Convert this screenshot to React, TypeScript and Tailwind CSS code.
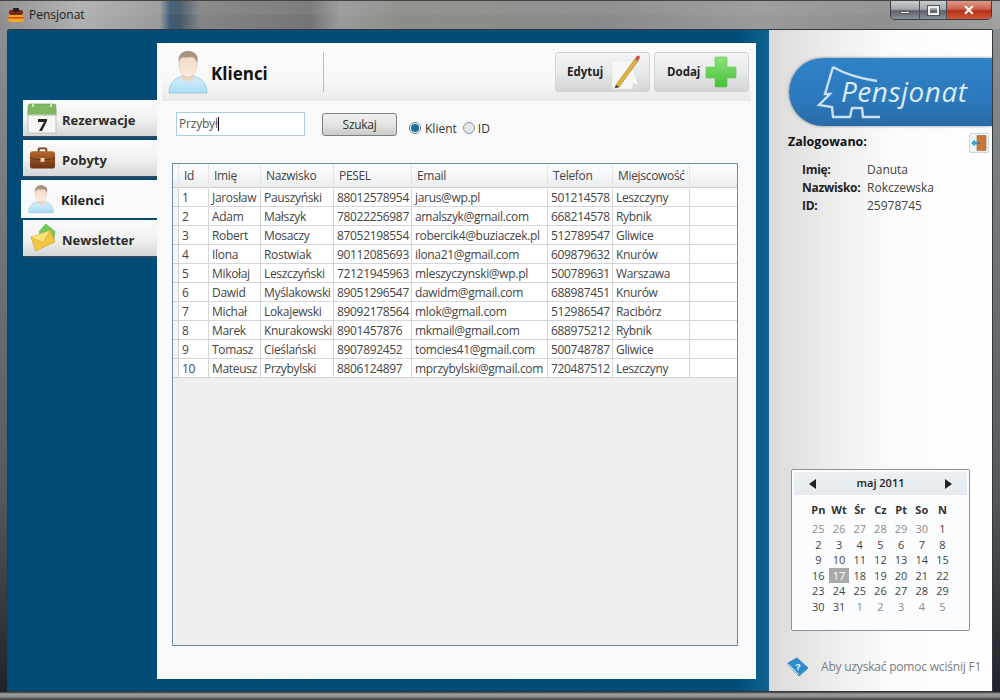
import React from "react";

const FONT = "font-['Open_Sans','Noto_Sans',sans-serif]";

const clients = [
  ["1", "Jarosław", "Pauszyński", "88012578954", "jarus@wp.pl", "501214578", "Leszczyny"],
  ["2", "Adam", "Małszyk", "78022256987", "amalszyk@gmail.com", "668214578", "Rybnik"],
  ["3", "Robert", "Mosaczy", "87052198554", "robercik4@buziaczek.pl", "512789547", "Gliwice"],
  ["4", "Ilona", "Rostwiak", "90112085693", "ilona21@gmail.com", "609879632", "Knurów"],
  ["5", "Mikołaj", "Leszczyński", "72121945963", "mleszyczynski@wp.pl", "500789631", "Warszawa"],
  ["6", "Dawid", "Myślakowski", "89051296547", "dawidm@gmail.com", "688987451", "Knurów"],
  ["7", "Michał", "Lokajewski", "89092178564", "mlok@gmail.com", "512986547", "Racibórz"],
  ["8", "Marek", "Knurakowski", "8901457876", "mkmail@gmail.com", "688975212", "Rybnik"],
  ["9", "Tomasz", "Cieślański", "8907892452", "tomcies41@gmail.com", "500748787", "Gliwice"],
  ["10", "Mateusz", "Przybylski", "8806124897", "mprzybylski@gmail.com", "720487512", "Leszczyny"],
];

const headers = ["Id", "Imię", "Nazwisko", "PESEL", "Email", "Telefon", "Miejscowość"];

const days = [
  [25, 26, 27, 28, 29, 30, 1],
  [2, 3, 4, 5, 6, 7, 8],
  [9, 10, 11, 12, 13, 14, 15],
  [16, 17, 18, 19, 20, 21, 22],
  [23, 24, 25, 26, 27, 28, 29],
  [30, 31, 1, 2, 3, 4, 5],
];

const ROW = "grid grid-cols-[6px_30px_52px_73px_78px_136px_65px_77px_1fr]";

function PersonIcon({ className }: { className: string }) {
  return (
    <svg viewBox="0 0 40 44" className={className}>
      <defs>
        <linearGradient id="shirt" x1="0" y1="0" x2="0" y2="1">
          <stop offset="0" stopColor="#d8effa" />
          <stop offset="1" stopColor="#a9dcf3" />
        </linearGradient>
        <linearGradient id="face" x1="0" y1="0" x2="0" y2="1">
          <stop offset="0" stopColor="#efd3bc" />
          <stop offset="1" stopColor="#fbeee2" />
        </linearGradient>
      </defs>
      <path d="M1 43c0-10 6-15 14-17h10c8 2 14 7 14 17z" fill="url(#shirt)" stroke="#8fc1da" strokeWidth="0.8" />
      <path d="M14 20h12v8c-2 4-10 4-12 0z" fill="#f0d3bb" />
      <ellipse cx="20" cy="14" rx="9" ry="13" fill="url(#face)" stroke="#d6b8a0" strokeWidth="0.5" />
      <path d="M11 13C9 4 15 1 20 1s12 3 9 12c-1-4-3-6-6-6-4 1-9 0-10 1-1 1-2 3-2 5z" fill="#a8937e" />
    </svg>
  );
}

function CalendarIcon() {
  return (
    <svg viewBox="0 0 32 32" className="w-[32px] h-[32px]">
      <rect x="1" y="8" width="28" height="23" fill="#f6f6f2" stroke="#c4c4bc" />
      <path d="M1 4q0-2 2-2h24q2 0 2 2v9H1z" fill="#7fb860" stroke="#6a9f50" strokeWidth="0.6" />
      <rect x="5" y="1" width="2" height="4" fill="#cfe6bd" />
      <rect x="23" y="1" width="2" height="4" fill="#cfe6bd" />
      <path d="M1 13h28" stroke="#d8d8d0" />
      <path d="M11 17h9v2l-5 10h-3l5-9h-6z" fill="#262626" />
    </svg>
  );
}

function BriefcaseIcon() {
  return (
    <svg viewBox="0 0 28 24" className="w-[27px] h-[24px]">
      <defs>
        <linearGradient id="case" x1="0" y1="0" x2="0" y2="1">
          <stop offset="0" stopColor="#b5672f" />
          <stop offset="1" stopColor="#6d3413" />
        </linearGradient>
      </defs>
      <path d="M9 6V3q0-2 2-2h6q2 0 2 2v3h-2V3h-6v3z" fill="#6f3d1c" />
      <rect x="1" y="5" width="26" height="18" rx="3" fill="url(#case)" />
      <path d="M1 12q13 4 26 0" stroke="#5d2c10" strokeWidth="0.8" fill="none" />
      <rect x="12" y="12" width="4" height="4" rx="0.5" fill="#f2e2c8" />
    </svg>
  );
}

function MailIcon() {
  return (
    <svg viewBox="0 0 28 30" className="w-[26px] h-[28px]">
      <path d="M10 8 17 0l10 8-2 12H12z" fill="#72c95a" stroke="#55a540" strokeWidth="0.6" />
      <path d="M1 14 22 7l5 12-21 10z" fill="#f3c63f" stroke="#c8962a" strokeWidth="0.6" />
      <path d="M1 14l13 6 8-13" fill="#fbe17a" stroke="#d0a030" strokeWidth="0.6" />
    </svg>
  );
}

function PencilIcon() {
  return (
    <svg viewBox="0 0 30 36" className="w-[30px] h-[36px]">
      <path d="M1 7h19l7 24-5 4H1z" fill="#f7f7f5" stroke="#e2e2de" strokeWidth="0.6" />
      <path d="M21 35l1-6 5 2z" fill="#d9d9d5" />
      <path d="M5 31 24 5l3 2L8 33l-4 1z" fill="#e2b23a" stroke="#8a6a1c" strokeWidth="0.5" />
      <path d="M24 5l2-3q1-1 2 0l1 1q0 1-1 2l-1 2z" fill="#d4453c" />
      <path d="M5 31l-1 3 4-1z" fill="#333" />
    </svg>
  );
}

function PlusIcon() {
  return (
    <svg viewBox="0 0 32 32" className="w-[32px] h-[32px]">
      <defs>
        <linearGradient id="plus" x1="0" y1="0" x2="0" y2="1">
          <stop offset="0" stopColor="#8ee27a" />
          <stop offset="1" stopColor="#47c03a" />
        </linearGradient>
      </defs>
      <path d="M10 2q0-1 1-1h10q1 0 1 1v9h8q1 0 1 1v9q0 1-1 1h-8v8q0 1-1 1H11q-1 0-1-1v-8H2q-1 0-1-1v-9q0-1 1-1h8z" fill="url(#plus)" stroke="#5cc64c" strokeWidth="0.6" />
    </svg>
  );
}

function DoorIcon() {
  return (
    <svg viewBox="0 0 16 16" className="w-[16px] h-[16px]">
      <rect x="6" y="0.5" width="9" height="15" rx="0.5" fill="#c8793a" stroke="#a85e26" strokeWidth="0.6" />
      <rect x="7" y="7" width="1.4" height="2" fill="#6d3a14" />
      <path d="M0 8l4-3.5V6.5h3.5v3H4V11.5z" fill="#3aa0c8" />
    </svg>
  );
}

function BookIcon() {
  return (
    <svg viewBox="0 0 22 20" className="w-[22px] h-[20px]">
      <path d="M1 6 10 1l11 10-9 8z" fill="#2b8fd0" stroke="#1d6da8" strokeWidth="0.7" />
      <path d="M1 6v2l11 11v-2z" fill="#dff0fa" stroke="#1d6da8" strokeWidth="0.5" />
      <text x="11" y="12.5" fontSize="9" fontWeight="700" textAnchor="middle" fill="#fff" fontFamily="Liberation Sans, sans-serif">?</text>
    </svg>
  );
}

function Logo() {
  return (
    <div className="relative h-[68px] ml-[20px] mt-[28px] rounded-l-[38px] bg-[linear-gradient(180deg,#2f82c6_0%,#2c79bd_60%,#2a6aa6_100%)] shadow-[0_0_3px_rgba(70,70,70,0.7)]">
      <svg viewBox="0 0 203 68" className="w-[203px] h-[68px]">
        <path
          d="M44 9Q61 19 88 23M44 9 36 36H41L30 47 43 49 44 59H61L63 50H73L74 59H91"
          fill="none"
          stroke="#c8e0f2"
          strokeWidth="2.4"
        />
      </svg>
      <span className="absolute left-[52px] top-[14px] font-['Open_Sans',sans-serif] italic font-medium text-[28px] leading-[38px] tracking-[0.5px] text-[#dcecf7]">
        Pensjonat
      </span>
    </div>
  );
}

function NavItem({ icon, label, active }: { icon: React.ReactNode; label: string; active?: boolean }) {
  if (active) {
    return (
      <div className="ml-[13px] w-[136px] h-[38px] mb-[2px] bg-[#f8f9fb] flex items-center">
        <div className="w-[40px] flex justify-center">{icon}</div>
        <span className="pt-[3px] text-[13px] font-bold text-[#222]">{label}</span>
      </div>
    );
  }
  return (
    <div className="ml-[15px] w-[134px] h-[38px] mb-[2px] bg-[linear-gradient(180deg,#fbfbfb_0%,#f0f0f0_55%,#d4d5d7_100%)] border-b-2 border-[#2c4a60] flex items-center">
      <div className="w-[39px] flex justify-center">{icon}</div>
      <span className="pt-[5px] text-[13px] font-bold text-[#2b2b2b]">{label}</span>
    </div>
  );
}

function Calendar() {
  return (
    <div className="ml-[22px] w-[179px] h-[162px] bg-[#fbfcfd] border border-[#8b9299] rounded-[2px] p-[2px]">
      <div className="h-[23px] bg-[linear-gradient(180deg,#edf1f4,#e3e9ee)] flex items-center justify-between px-[15px]">
        <span className="w-0 h-0 border-y-[5px] border-y-transparent border-r-[7px] border-r-[#222]" />
        <span className="text-[11px] font-semibold text-[#222]">maj 2011</span>
        <span className="w-0 h-0 border-y-[5px] border-y-transparent border-l-[7px] border-l-[#222]" />
      </div>
      <div className="mt-[6px] ml-[14px] grid grid-cols-[repeat(7,20.7px)] text-center text-[11px] font-bold text-[#333] leading-[17px]">
        {["Pn", "Wt", "Śr", "Cz", "Pt", "So", "N"].map((d) => (
          <span key={d}>{d}</span>
        ))}
      </div>
      <div className="mt-[3px] ml-[14px] grid grid-cols-[repeat(7,20.7px)] auto-rows-[15.5px] text-center text-[11px] leading-[15px]">
        {days.map((week, w) =>
          week.map((d, i) => {
            const muted = (w === 0 && i < 6) || (w === 5 && i > 1);
            const today = w === 3 && i === 1;
            return (
              <span key={w + "-" + i} className={today ? "bg-[#a9a9a9] text-white" : muted ? "text-[#8a8a8a]" : "text-[#444]"}>
                {d}
              </span>
            );
          })
        )}
      </div>
    </div>
  );
}

function ClientsTable() {
  return (
    <div className="mt-[27px] ml-[15px] w-[566px] h-[483px] border border-[#6d8ba5] bg-[#efefef] text-[12px] text-[#444] tracking-[-0.32px]">
      <div className={ROW + " h-[24px] bg-[linear-gradient(180deg,#fcfcfd_0%,#f6f7f8_50%,#e9ecee_100%)] border-b border-[#c9ced3] leading-[24px]"}>
        <span className="border-r border-[#e3e5e8]" />
        {headers.map((h) => (
          <span key={h} className="pl-[5px] border-r border-[#e3e5e8] text-[#444]">
            {h}
          </span>
        ))}
        <span />
      </div>
      {clients.map((row) => (
        <div key={row[0]} className={ROW + " h-[19px] bg-white leading-[20px]"}>
          <span className="bg-[#f4f5f6] border-r border-b border-[#cfd1d4]" />
          {row.map((cell, i) => (
            <span key={i} className="pl-[3px] border-r border-b border-[#d4d6d9] whitespace-nowrap overflow-hidden">
              {cell}
            </span>
          ))}
          <span className="border-b border-[#d4d6d9]" />
        </div>
      ))}
    </div>
  );
}

export default function App() {
  return (
    <div className={"w-[1000px] h-[700px] overflow-hidden flex flex-col bg-[#55585c] " + FONT}>
      {/* title bar */}
      <div className="relative h-[29px] shrink-0 flex items-start border-t border-[#444] bg-[linear-gradient(90deg,#8e8e8e_0%,#b0b0b0_8%,#9a9a9a_16%,#3f5d75_17%,#46596a_18%,#858585_20%,#757575_31%,#9a9a9a_34%,#8d8d88_40%,#8a8a8a_60%,#9a9a9a_76%,#8f8f8f_88%,#a0a0a0_100%)]">
        <div className="absolute inset-x-0 top-0 h-[14px] bg-white/5" />
        <svg viewBox="0 0 16 16" className="relative ml-[8px] mt-[6px] w-[16px] h-[16px]">
          <rect x="1" y="3" width="14" height="5" rx="2" fill="#7a2a14" />
          <rect x="5" y="1" width="6" height="4" rx="1" fill="#222" />
          <rect x="0.5" y="8" width="15" height="7" rx="1" fill="#f0a81e" />
          <rect x="0.5" y="10" width="15" height="1.5" fill="#d8401e" />
        </svg>
        <span className="relative ml-[5px] mt-[6px] text-[12px] leading-[16px] text-[#1c1c1c]">Pensjonat</span>
        <div className="relative ml-auto mr-[8px] flex h-[19px] w-[102px] rounded-b-[5px] border border-t-0 border-[#3b3f44] overflow-hidden">
          <div className="w-[29px] flex items-center justify-center border-r border-[#4a4e52] bg-[linear-gradient(180deg,#c8cdd2_0%,#a3a9af_45%,#5c6268_55%,#8b9196_100%)]">
            <span className="mt-[4px] w-[10px] h-[3px] bg-white border border-[#555]" />
          </div>
          <div className="w-[27px] flex items-center justify-center border-r border-[#4a4e52] bg-[linear-gradient(180deg,#c8cdd2_0%,#a3a9af_45%,#5c6268_55%,#8b9196_100%)]">
            <span className="w-[11px] h-[9px] border-2 border-[#eee] outline outline-1 outline-[#555]" />
          </div>
          <div className="flex-1 flex items-center justify-center bg-[linear-gradient(180deg,#dd9b8b_0%,#c9604a_45%,#b3301a_55%,#d0583a_100%)] text-white text-[14px] font-bold leading-none">
            ✕
          </div>
        </div>
      </div>

      {/* window body */}
      <div className="flex-1 flex px-[7px] bg-[linear-gradient(180deg,#8a8f94_0%,#55585c_70%,#1f2228_100%)]">
        <div className="w-full flex border border-[#33383d] rounded-t-[2px] overflow-hidden">
          {/* blue side */}
          <div className="w-[761px] flex bg-[radial-gradient(circle,rgba(255,255,255,0.015)_1px,transparent_1px),linear-gradient(90deg,#024b76_0%,#024c78_96%,#0f6390_100%)] bg-[length:3px_3px,100%_100%]">
            <nav className="w-[149px] pt-[70px] shrink-0">
              <NavItem icon={<CalendarIcon />} label="Rezerwacje" />
              <NavItem icon={<BriefcaseIcon />} label="Pobyty" />
              <NavItem active icon={<PersonIcon className="w-[26px] h-[30px]" />} label="Kilenci" />
              <NavItem icon={<MailIcon />} label="Newsletter" />
            </nav>
            <main className="mt-[13px] w-[599px] h-[636px] bg-[#f8f9fb]">
              {/* header band */}
              <div className="relative mx-[5px] h-[58px] bg-[linear-gradient(180deg,#fbfbfc_0%,#f7f7f8_65%,#e9e9ea_100%)] flex items-center">
                <div className="ml-[6px] w-[40px]">
                  <PersonIcon className="w-[40px] h-[44px]" />
                </div>
                <h1 className="ml-[3px] w-[112px] pt-[3px] text-[17px] font-bold text-[#111]">Klienci</h1>
                <span className="w-px h-[40px] bg-[#bdbdbd]" />
                <div className="ml-auto mr-[2px] flex gap-[4px]">
                  <button className="w-[95px] h-[40px] border border-[#d0d4d8] rounded-[3px] bg-[linear-gradient(180deg,#f3f4f5_0%,#e8e9ea_50%,#d3d4d5_100%)] flex items-center pl-[11px] gap-[8px] text-[11.5px] font-bold text-[#222]">
                    Edytuj
                    <PencilIcon />
                  </button>
                  <button className="w-[95px] h-[40px] border border-[#d0d4d8] rounded-[3px] bg-[linear-gradient(180deg,#f3f4f5_0%,#e8e9ea_50%,#d3d4d5_100%)] flex items-center pl-[12px] gap-[5px] text-[11.5px] font-bold text-[#222]">
                    Dodaj
                    <PlusIcon />
                  </button>
                </div>
              </div>
              {/* search row */}
              <div className="mt-[11px] h-[24px] flex items-start text-[12px] leading-[16px] text-[#333]">
                <div className="ml-[19px] w-[129px] h-[24px] bg-white border border-[#a9cfe4] flex items-center pl-[2px] tracking-[-0.2px] text-[#555]">
                  Przybył
                  <span className="w-px h-[14px] bg-black" />
                </div>
                <button className="ml-[17px] mt-[1px] w-[75px] h-[23px] border border-[#7b8084] rounded-[3px] bg-[linear-gradient(180deg,#f0f0f0_0%,#e5e5e5_50%,#c9c9c9_100%)] text-[12px] tracking-[-0.3px] text-[#333]">
                  Szukaj
                </button>
                <span className="ml-[12px] mt-[10px] w-[12px] h-[12px] rounded-full border border-[#6d7f8d] bg-white flex items-center justify-center">
                  <span className="w-[8px] h-[8px] rounded-full bg-[#17719f]" />
                </span>
                <span className="ml-[4px] mt-[9px]">Klient</span>
                <span className="ml-[6px] mt-[10px] w-[12px] h-[12px] rounded-full border border-[#8d969c] bg-[#e4e6e8]" />
                <span className="ml-[3px] mt-[9px]">ID</span>
              </div>
              <ClientsTable />
            </main>
            <div className="flex-1" />
          </div>

          {/* right panel */}
          <aside className="flex-1 flex flex-col bg-[linear-gradient(90deg,#dadada_0%,#eeeeee_30%,#fbfbfb_55%,#ffffff_100%)]">
            <Logo />
            <div className="mt-[7px] pl-[19px] pr-[3px] flex items-start justify-between">
              <span className="text-[12.5px] font-bold text-[#111]">Zalogowano:</span>
              <span className="w-[20px] h-[20px] rounded-[2px] border border-[#c9d9e4] bg-[#eef3f6] flex items-center justify-center">
                <DoorIcon />
              </span>
            </div>
            <dl className="mt-[8px] ml-[33px] grid grid-cols-[65px_1fr] auto-rows-[18px] text-[12px] leading-[18px]">
              <dt className="font-bold text-[#222] tracking-[-0.3px]">Imię:</dt>
              <dd className="text-[#444]">Danuta</dd>
              <dt className="font-bold text-[#222] tracking-[-0.3px]">Nazwisko:</dt>
              <dd className="text-[#444]">Rokczewska</dd>
              <dt className="font-bold text-[#222] tracking-[-0.3px]">ID:</dt>
              <dd className="text-[#444]">25978745</dd>
            </dl>
            <div className="mt-[254px]">
              <Calendar />
            </div>
            <div className="mt-[26px] ml-[18px] flex items-center">
              <BookIcon />
              <span className="ml-[12px] text-[12px] text-[#7d7d7d] tracking-[-0.2px]">Aby uzyskać pomoc wciśnij F1</span>
            </div>
          </aside>
        </div>
      </div>
      {/* bottom frame */}
      <div className="h-[8px] shrink-0 bg-[linear-gradient(180deg,#33383d_0%,#a0a0a0_25%,#8a8a8a_60%,#3a3a3a_100%)]" />
    </div>
  );
}
